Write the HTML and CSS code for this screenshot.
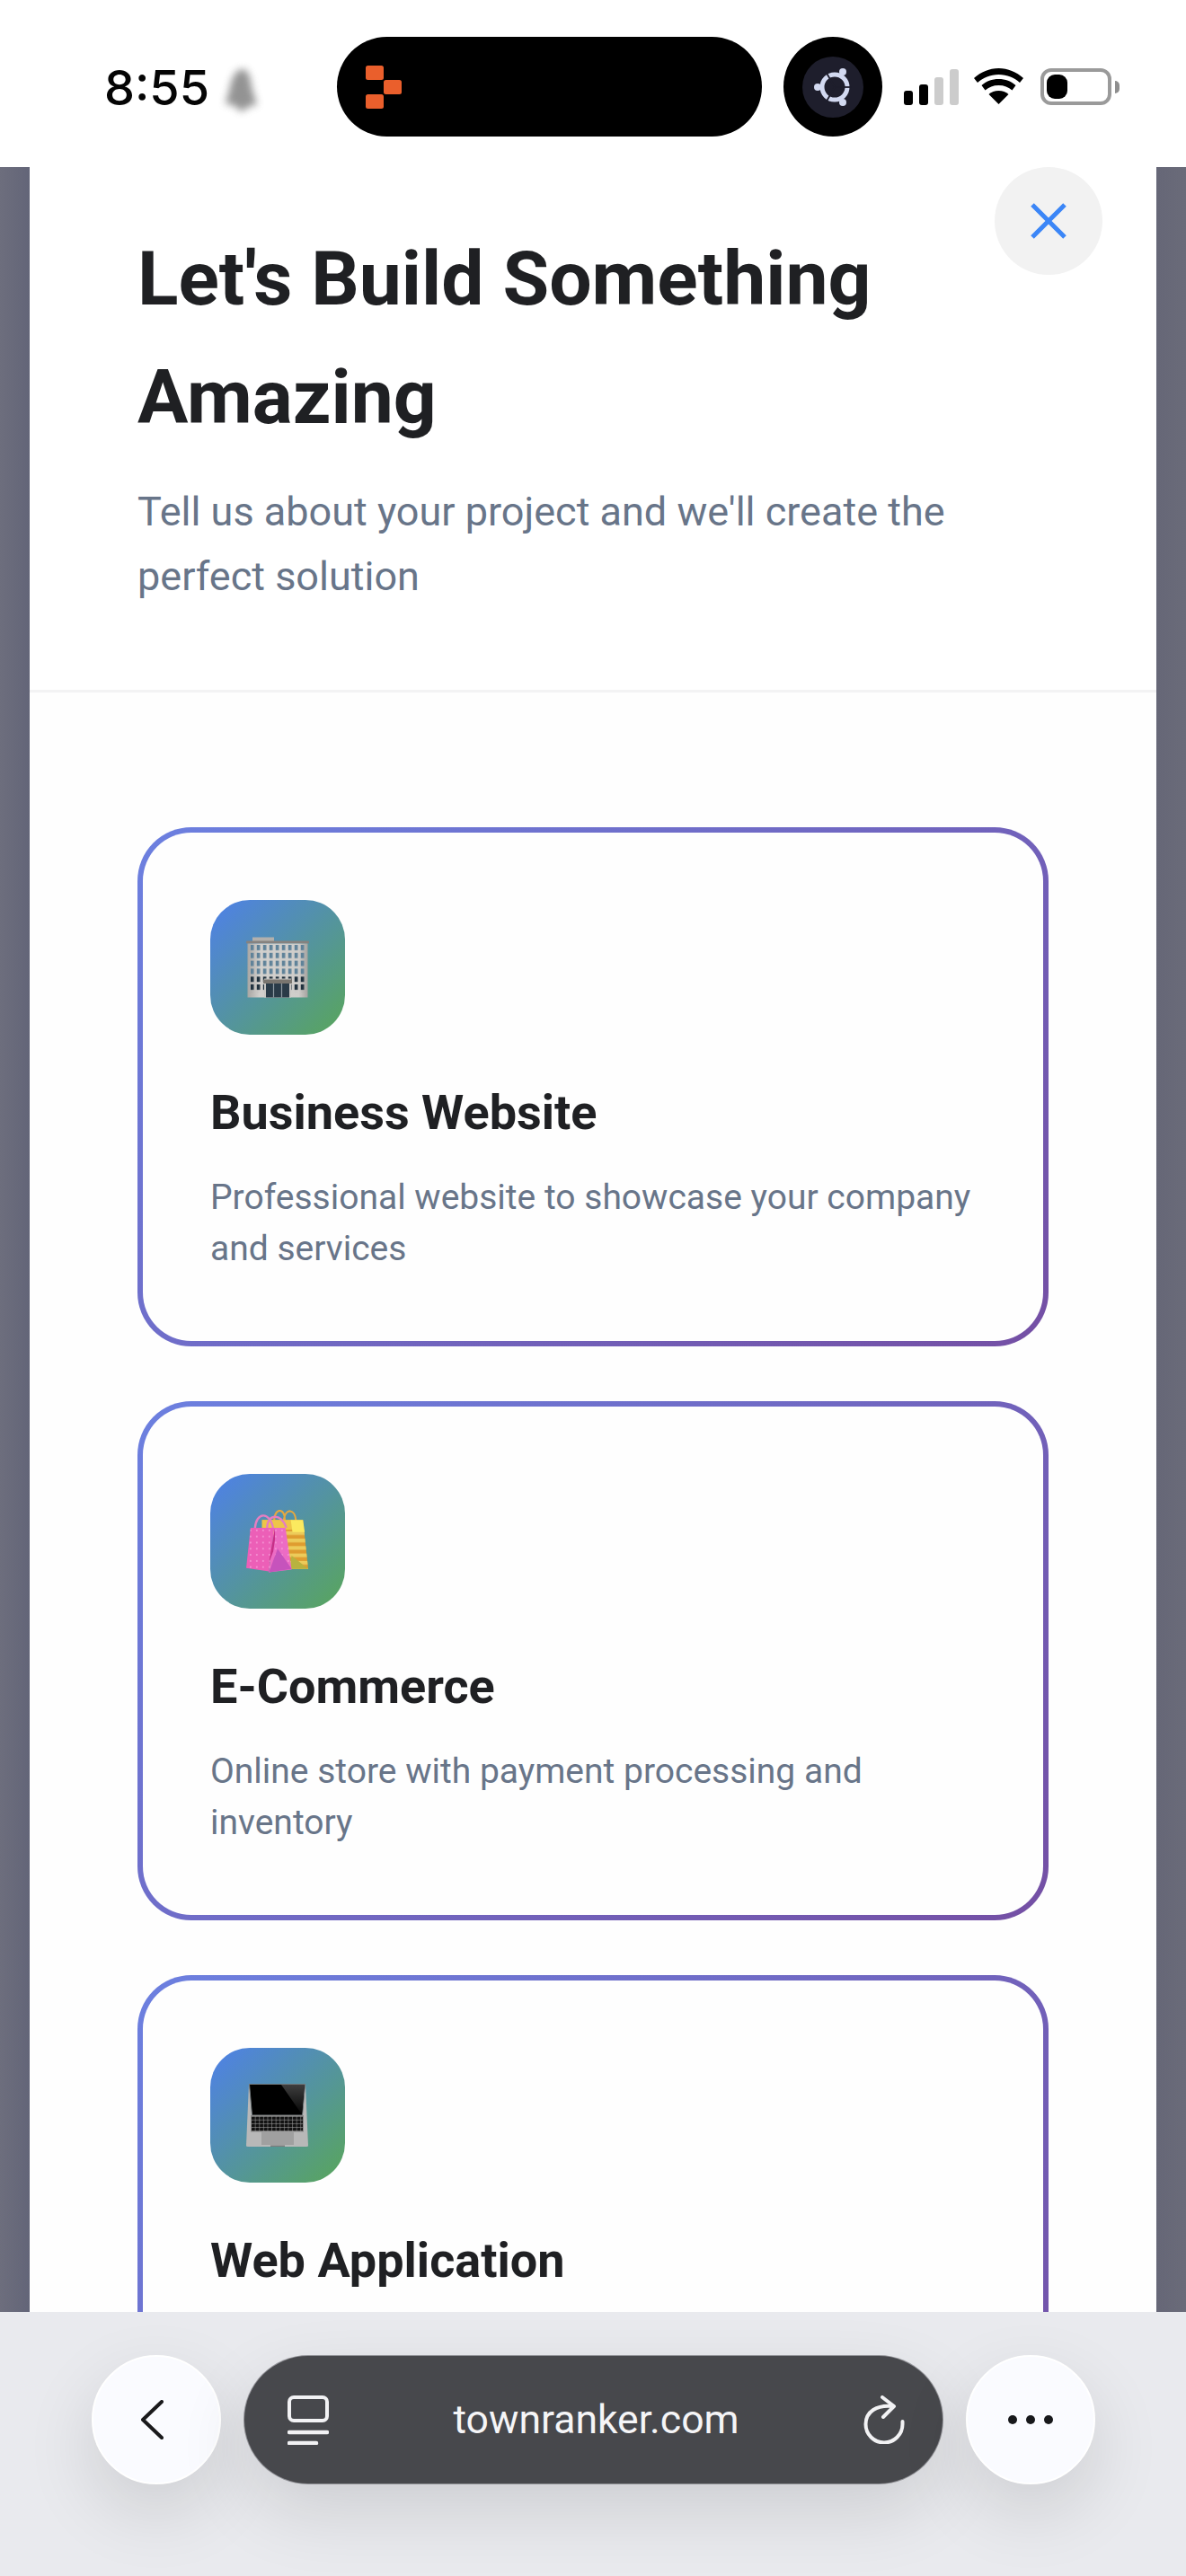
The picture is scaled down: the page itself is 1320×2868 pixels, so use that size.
FILE: index.html
```html
<!DOCTYPE html>
<html lang="en">
<head>
<meta charset="utf-8">
<title>townranker.com</title>
<link rel="stylesheet" href="styles.css">
</head>
<body>
<div class="screen">
  <header class="status">
    <span class="time">8:55</span>
    <svg class="bell" viewBox="0 0 44 48"><path d="M24 2c6 0 9 9 10 20l6 20-9 1-5 5h-6l-5-6-10-1 5-19C12 11 17 2 24 2z" fill="#666"/></svg>
    <div class="island">
      <svg class="island-logo" viewBox="0 0 42 48"><rect x="0" y="0" width="20" height="16" rx="2.5" fill="#ea5f2c"/><rect x="20" y="16" width="20" height="16" rx="2.5" fill="#ea5f2c"/><rect x="0" y="32" width="20" height="16" rx="2.5" fill="#ea5f2c"/></svg>
    </div>
    <div class="cam">
      <div class="cam-inner">
        <svg class="ubuntu" viewBox="0 0 42 42"><circle cx="23" cy="21" r="14" fill="none" stroke="#d2d9f0" stroke-width="5"/><g stroke="#1e1e2c" stroke-width="1.800"><path d="M23 21 L42 21"/><path d="M23 21 L13.500 4.500"/><path d="M23 21 L13.500 37.500"/></g><circle cx="4" cy="21" r="4" fill="#d2d9f0"/><circle cx="32" cy="4" r="4" fill="#d2d9f0"/><circle cx="32" cy="38" r="4" fill="#d2d9f0"/></svg>
      </div>
    </div>
    <svg class="signal" viewBox="0 0 61 40"><rect x="0" y="24" width="10" height="16" rx="3" fill="#000"/><rect x="17" y="17" width="10" height="23" rx="3" fill="#000"/><rect x="34" y="9" width="10" height="31" rx="3" fill="#ccc"/><rect x="51" y="0" width="10" height="40" rx="3" fill="#ccc"/></svg>
    <svg class="wifi" viewBox="0 0 55 40"><path d="M27.5 0C17 0 8 4 0 11l4 5c6.500-5.500 14-9 23.500-9S45 10.500 51 16l4-5C47 4 38 0 27.500 0z"/><path d="M27.500 12c-7.500 0-14 2.500-19 7l4 5.500c4-3.500 9-5.500 15-5.500s11 2 15 5.500l4-5.500c-5-4.500-11.500-7-19-7z"/><path d="M27.500 25c-4.500 0-8 1.300-11 4l11 11 11-11c-3-2.700-6.500-4-11-4z"/></svg>
    <div class="battery"><div class="battery-body"><div class="battery-fill"></div></div><div class="battery-nub"></div></div>
  </header>

  <main class="stage">
    <section class="modal">
      <button class="close" aria-label="Close">
        <svg viewBox="0 0 40 40"><path d="M2 2 L38 38 M38 2 L2 38" stroke="#3b86f7" stroke-width="5" fill="none"/></svg>
      </button>
      <div class="modal-head">
        <h1 class="title">Let's Build Something Amazing</h1>
        <p class="subtitle">Tell us about your project and we'll create the perfect solution</p>
      </div>
      <div class="modal-body">
        <article class="card">
          <div class="tile">
            <svg class="emoji" viewBox="0 0 70 67">
              <defs>
                <linearGradient id="wall" x1="0" x2="1" y1="0" y2="0"><stop offset="0" stop-color="#a8a6a3"/><stop offset=".2" stop-color="#d2d0cd"/><stop offset=".85" stop-color="#cfcdca"/><stop offset="1" stop-color="#a5a3a0"/></linearGradient>
                <pattern id="winUp" x="4.800" y="8.500" width="7" height="8.800" patternUnits="userSpaceOnUse"><rect width="3.600" height="6" fill="#5f8299"/></pattern>
                <pattern id="winDn" x="4.800" y="43.700" width="7" height="8.800" patternUnits="userSpaceOnUse"><rect width="3.600" height="6" fill="#1f303d"/></pattern>
              </defs>
              <rect x="7" y="0" width="24" height="5" fill="#b2b0ad"/>
              <rect x="0" y="4" width="70" height="3" rx="1" fill="#86827f"/>
              <rect x="1.500" y="7" width="67" height="60" fill="url(#wall)"/>
              <rect x="4.800" y="8.500" width="60.500" height="35" fill="url(#winUp)"/>
              <rect x="4.800" y="43.700" width="60.500" height="17" fill="url(#winDn)"/>
              <rect x="20" y="46" width="30" height="21" fill="#c9c7c4"/>
              <rect x="19" y="47" width="32" height="4.500" fill="#79756f"/>
              <rect x="22" y="51.500" width="26" height="15.500" fill="#2a3b48"/>
              <path d="M30.500 51.500V67M39.500 51.500V67" stroke="#8f9aa3" stroke-width="1.200"/>
            </svg>
          </div>
          <h2 class="card-title">Business Website</h2>
          <p class="card-desc">Professional website to showcase your company and services</p>
        </article>

        <article class="card">
          <div class="tile">
            <svg class="emoji" viewBox="0 0 72 71">
              <defs>
                <pattern id="stripes" width="10" height="8.500" patternUnits="userSpaceOnUse" y="24"><rect width="10" height="4.200" fill="#eccb5a"/></pattern>
                <pattern id="dots" width="7.200" height="7" patternUnits="userSpaceOnUse" x="2" y="20"><circle cx="3" cy="3" r="1" fill="#f59ad8"/></pattern>
              </defs>
              <path d="M32 11 C33 -4 45 -2 44 11 M43 11 C45 -3 56 -2 57 12" fill="none" stroke="#e7a83e" stroke-width="2.200"/>
              <path d="M18 11 H65 L71 67 H50 L40 40z" fill="#df9c30"/>
              <path d="M18 11 H65 L71 67 H50 L40 40z" fill="url(#stripes)"/>
              <path d="M18 11 H52 L55 13 V22 H18z" fill="#eec548"/>
              <path d="M51 11 H65 L67 25 H53z" fill="#fbe95f"/>
              <path d="M52 52 L71 67 H50z" fill="#b8b23f"/>
              <path d="M10 21 C11 2 27 0 31 21 M24 22 C23 4 40 2 46 20" fill="none" stroke="#e57ec1" stroke-width="2.400"/>
              <path d="M5 20 H32 L26 70 L0 66z" fill="#ec5fb7"/>
              <path d="M5 20 H32 L26 70 L0 66z" fill="url(#dots)"/>
              <path d="M32 20 H45 L52 68 L26 71z" fill="#ec6cc4"/>
              <path d="M32 20 H45 L52 68 L26 71z" fill="url(#dots)"/>
              <path d="M33 20 L26 60 L31 47 L33 33z" fill="#c62f87"/>
              <path d="M36 44 L52 67 L26 71z" fill="#c653bc"/>
            </svg>
          </div>
          <h2 class="card-title">E-Commerce</h2>
          <p class="card-desc">Online store with payment processing and inventory</p>
        </article>

        <article class="card">
          <div class="tile">
            <svg class="emoji" viewBox="0 0 70 70">
              <defs>
                <linearGradient id="shine" x1="0" y1="0" x2="0" y2="1"><stop offset="0" stop-color="#3e3e3e"/><stop offset="1" stop-color="#050505"/></linearGradient>
                <pattern id="keys" width="4.600" height="4.100" patternUnits="userSpaceOnUse" x="6" y="36.500"><rect width="4" height="3.400" rx=".4" fill="#111"/></pattern>
              </defs>
              <path d="M3 0 H66 L69 69 Q69 70 67 70 H2 Q0 70 0 69z" fill="#b8b8b8"/>
              <path d="M3.500 .500 H65.500 L62.500 35 H6.500z" fill="#000" stroke="#6e7578" stroke-width="1"/>
              <path d="M39 1 H65 L62 34z" fill="url(#shine)"/>
              <rect x="5" y="35" width="59" height="18.500" fill="#8a8a8a"/>
              <rect x="6" y="36.500" width="57" height="16.500" fill="url(#keys)"/>
              <rect x="17" y="54" width="36" height="14" fill="#a0a0a0"/>
              <rect x="27" y="68.500" width="16" height="1.500" fill="#7d7d7d"/>
            </svg>
          </div>
          <h2 class="card-title">Web Application</h2>
        </article>
      </div>
    </section>
  </main>

  <footer class="toolbar">
    <button class="round" aria-label="Back">
      <svg class="chev" viewBox="0 0 25 44"><path d="M23 2 L2 22 L23 42" fill="none" stroke="#1a1a1c" stroke-width="4" stroke-linecap="round" stroke-linejoin="round"/></svg>
    </button>
    <div class="pill">
      <svg class="tabs" viewBox="0 0 46 55"><rect x="2" y="2" width="42" height="26" rx="5" fill="none" stroke="#f2f2f4" stroke-width="4"/><path d="M2 41 H44 M2 53 H32" stroke="#f2f2f4" stroke-width="4.500" stroke-linecap="round"/></svg>
      <span class="url">townranker.com</span>
      <svg class="reload" viewBox="0 0 46 54"><path d="M33 12 C15 10 2.500 18 2.500 32 A20.500 20.500 0 0 0 43.500 32 V29" fill="none" stroke="#f2f2f4" stroke-width="4" stroke-linecap="round"/><path d="M21 2 L34 12 L22 24" fill="none" stroke="#f2f2f4" stroke-width="4" stroke-linecap="round" stroke-linejoin="round"/></svg>
    </div>
    <button class="round" aria-label="More">
      <svg class="dots" viewBox="0 0 50 10"><circle cx="5" cy="5" r="5" fill="#17181b"/><circle cx="25" cy="5" r="5" fill="#17181b"/><circle cx="45" cy="5" r="5" fill="#17181b"/></svg>
    </button>
  </footer>
</div>
</body>
</html>
```

FILE: styles.css
```css
* { box-sizing: border-box; }
html, body { margin: 0; padding: 0; }
body { background: #fff; font-family: "Roboto", "Liberation Sans", sans-serif; }

.screen {
  width: 1320px;
  height: 2868px;
  display: flex;
  flex-direction: column;
  overflow: hidden;
}

/* status bar */
.status {
  height: 186px;
  flex: none;
  background: #fff;
  display: flex;
  align-items: flex-start;
  padding: 41px 0 0 116px;
}
.time {
  width: 116px;
  margin-top: 25px;
  font-family: "Inter", sans-serif;
  font-weight: 500;
  font-size: 54px;
  line-height: 64px;
  color: #050505;
  white-space: nowrap;
}
.bell {
  width: 44px;
  height: 48px;
  margin: 34px 0 0 14px;
  filter: blur(4px);
  opacity: .7;
}
.island {
  width: 473px;
  height: 111px;
  margin-left: 85px;
  border-radius: 56px;
  background: #000;
  display: flex;
  align-items: center;
  padding-left: 32px;
}
.island-logo { width: 42px; height: 48px; }
.cam {
  width: 110px;
  height: 111px;
  margin-left: 24px;
  border-radius: 50%;
  background: #000;
  display: flex;
  align-items: center;
  justify-content: center;
}
.cam-inner {
  width: 68px;
  height: 68px;
  border-radius: 50%;
  background: #1e1e2c;
  display: flex;
  align-items: center;
  justify-content: center;
}
.ubuntu { width: 42px; height: 42px; }
.signal { width: 61px; height: 40px; margin: 36px 0 0 24px; }
.wifi { width: 55px; height: 40px; margin: 35px 0 0 17px; }
.battery { display: flex; align-items: center; margin: 35px 0 0 19px; height: 41px; }
.battery-body {
  width: 79px;
  height: 41px;
  border: 4px solid #9a9a9a;
  border-radius: 12px;
  padding: 3px;
  background: #fff;
}
.battery-fill { width: 23px; height: 100%; border-radius: 9px; background: #000; }
.battery-nub {
  width: 5px;
  height: 14px;
  margin-left: 4px;
  border-radius: 0 7px 7px 0;
  background: #8e8e8e;
}

/* page behind the modal */
.stage {
  flex: 1;
  min-height: 0;
  padding: 0 33px;
  background: linear-gradient(90deg, #6d6e7d 0, #636578 33px, #636578 1287px, #666777 1288px, #6a6b79 100%);
  overflow: hidden;
}
.modal {
  position: relative;
  height: 100%;
  background: #fefefe;
  overflow: hidden;
}
.close {
  position: absolute;
  top: 0;
  right: 60px;
  width: 120px;
  height: 120px;
  padding: 0;
  border: 0;
  border-radius: 50%;
  background: #f2f2f2;
  display: flex;
  align-items: center;
  justify-content: center;
}
.close svg { width: 40px; height: 40px; }

.modal-head {
  padding: 59px 120px 90px;
  border-bottom: 3px solid #f3f3f4;
  background: #fff;
}
.title {
  margin: 0;
  font-weight: 700;
  font-size: 84px;
  line-height: 132px;
  color: #1f2023;
  max-width: 900px;
}
.subtitle {
  margin: 25px 0 0;
  font-weight: 400;
  font-size: 45px;
  line-height: 72px;
  color: #687589;
  max-width: 940px;
}

.modal-body {
  padding: 150px 120px 0;
  display: flex;
  flex-direction: column;
  gap: 61px;
}
.card {
  flex: none;
  height: 578px;
  padding: 75px;
  border: 6px solid transparent;
  border-radius: 60px;
  background:
    linear-gradient(#fefefe, #fefefe) padding-box,
    linear-gradient(135deg, #6c80e0, #744fa4) border-box;
}
.tile {
  width: 150px;
  height: 150px;
  border-radius: 44px;
  background: linear-gradient(135deg, #4e80ea, #59a65a);
  display: flex;
  align-items: center;
  justify-content: center;
}
.emoji { width: 70px; height: 70px; }
.card-title {
  margin: 53px 0 0;
  font-weight: 700;
  font-size: 54px;
  line-height: 68px;
  color: #1f2023;
}
.card-desc {
  margin: 32px 0 0;
  font-weight: 400;
  font-size: 39px;
  line-height: 57px;
  color: #687589;
}

/* browser toolbar */
.toolbar {
  height: 294px;
  flex: none;
  background: #e9eaee;
  display: flex;
  align-items: flex-start;
  padding: 48px 0 0 102px;
  gap: 26px;
}
.round {
  flex: none;
  width: 144px;
  height: 144px;
  padding: 0;
  border: 2px solid #fff;
  border-radius: 50%;
  background: #fafbff;
  box-shadow: 0 30px 80px rgba(0, 0, 0, .12);
  display: flex;
  align-items: center;
  justify-content: center;
}
.chev { width: 25px; height: 44px; margin-left: -10px; }
.dots { width: 50px; height: 10px; }
.pill {
  flex: none;
  width: 777px;
  height: 142px;
  margin-top: 1px;
  border-radius: 71px;
  background: #47484c;
  box-shadow: 0 0 0 1px rgba(70, 70, 76, .5), 0 30px 80px rgba(0, 0, 0, .12);
  display: flex;
  align-items: center;
  padding: 0 42px 0 48px;
}
.tabs { width: 46px; height: 55px; flex: none; }
.url {
  flex: 1;
  text-align: center;
  font-size: 44.500px;
  line-height: 52px;
  color: #f5f5f7;
}
.reload { width: 46px; height: 54px; flex: none; }
```
